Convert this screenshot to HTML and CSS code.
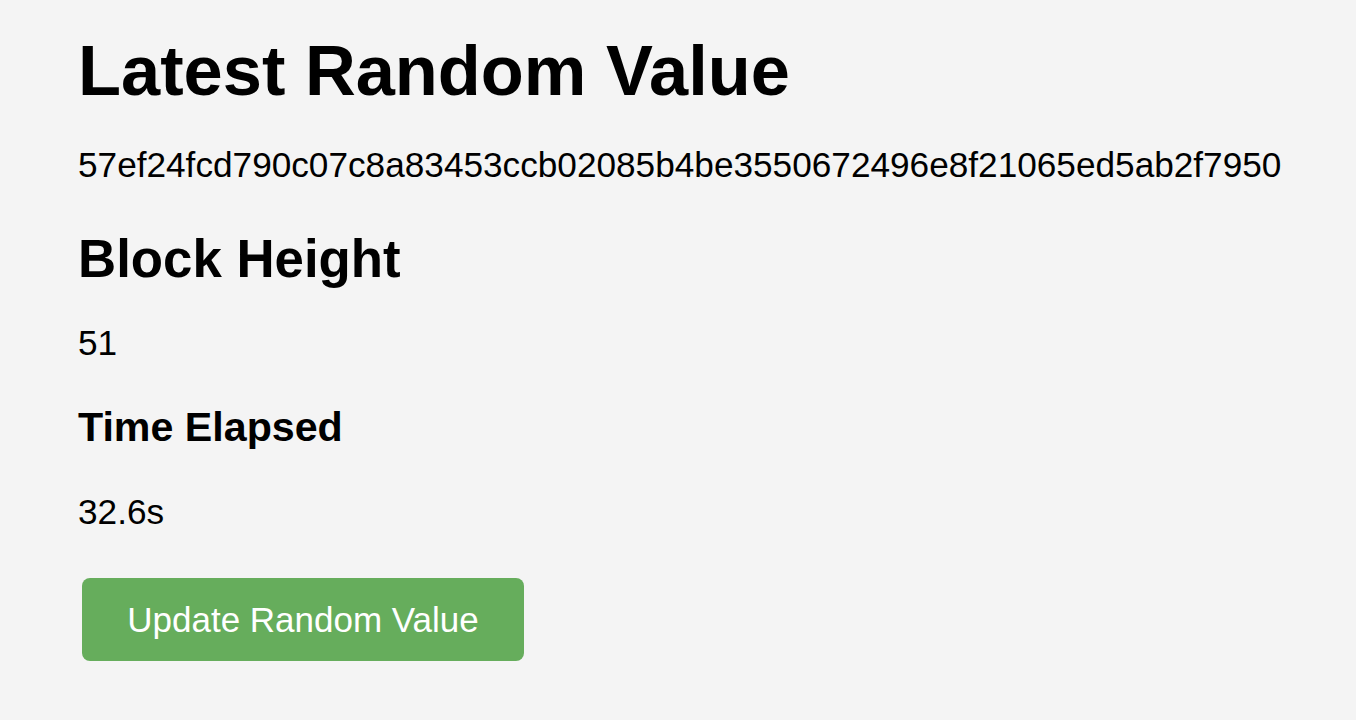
FILE: index.html
```html
<!DOCTYPE html>
<html>
<head>
<meta charset="utf-8">
<link rel="stylesheet" href="styles.css">
</head>
<body>
<main class="page">
  <h1 class="title">Latest Random Value</h1>
  <p class="value hex">57ef24fcd790c07c8a83453ccb02085b4be3550672496e8f21065ed5ab2f7950</p>
  <h2 class="subtitle">Block Height</h2>
  <p class="value height">51</p>
  <h3 class="label">Time Elapsed</h3>
  <p class="value elapsed">32.6s</p>
  <button class="update-btn">Update Random Value</button>
</main>
</body>
</html>
```
FILE: styles.css
```css
html, body {
  margin: 0;
  background: #f4f4f4;
}
body {
  font-family: "Liberation Sans", Arial, sans-serif;
  color: #000;
  font-size: 35.2px;
}
.page {
  padding: 30px 0 0 78px;
}
.title {
  font-size: 70.4px;
  font-weight: bold;
  margin: 0 0 34px;
}
.value {
  margin: 0;
  font-size: 35.2px;
}
.hex { margin-bottom: 43px; }
.subtitle {
  font-size: 52.8px;
  margin: 0 0 34px;
}
.height { margin-bottom: 40.5px; }
.label {
  font-size: 41.2px;
  margin: 0 0 41.5px;
}
.elapsed { margin-bottom: 46px; }
.update-btn {
  display: block;
  margin: 0 0 0 4px;
  width: 442px;
  height: 83px;
  background: #66ad5c;
  color: #fff;
  border: none;
  border-radius: 8px;
  font-family: "Liberation Sans", Arial, sans-serif;
  font-size: 35px;
  padding: 0;
}
```
